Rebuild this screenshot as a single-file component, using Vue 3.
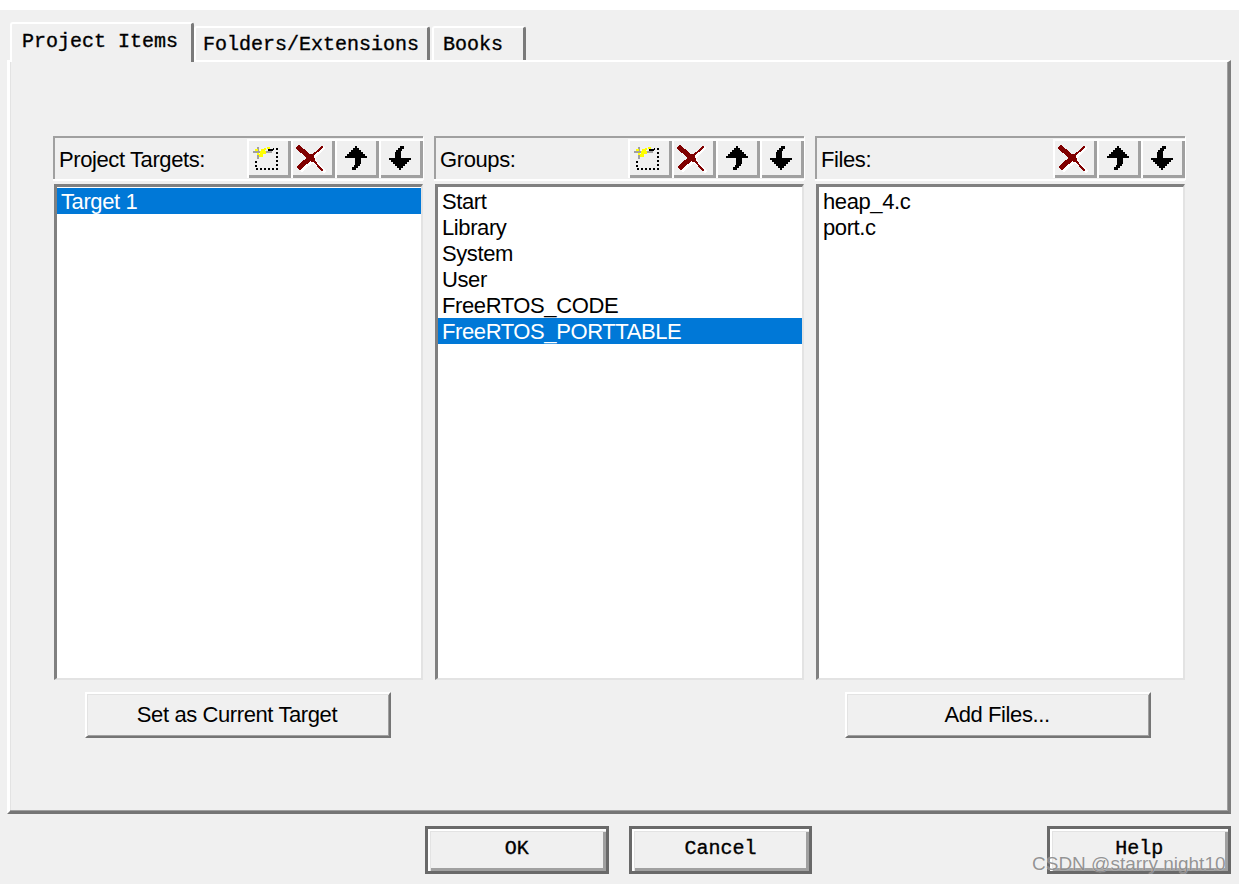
<script setup>
const columns = [
  { title: 'Project Targets:', tools: ['new', 'del', 'up', 'down'], items: ['Target 1'], selected: 0, action: 'Set as Current Target', actionClass: 'act-left' },
  { title: 'Groups:', tools: ['new', 'del', 'up', 'down'], items: ['Start', 'Library', 'System', 'User', 'FreeRTOS_CODE', 'FreeRTOS_PORTTABLE'], selected: 5 },
  { title: 'Files:', tools: ['del', 'up', 'down'], items: ['heap_4.c', 'port.c'], selected: -1, action: 'Add Files...', actionClass: 'act-right' }
]
const tabs = ['Project Items', 'Folders/Extensions', 'Books']
</script>

<template>
  <div class="page">
    <div class="dialog">
      <div class="tabs">
        <div v-for="(t, i) in tabs" :key="t" class="tab" :class="['tab' + i, { active: i === 0 }]">{{ t }}</div>
      </div>
      <div class="panel">
        <div class="grid">
          <section v-for="c in columns" :key="c.title" class="col">
            <header class="head">
              <span class="label">{{ c.title }}</span>
              <div class="tools">
                <button v-for="t in c.tools" :key="t" class="tool">
                  <svg width="44" height="39" viewBox="0 0 44 39">
                    <g v-if="t === 'new'" shape-rendering="crispEdges">
                      <rect x="9" y="10" width="21" height="20" fill="none" stroke="#000" stroke-width="2" stroke-dasharray="2 2" />
                      <path d="M6 8h20v6H6zM6 8h8v14H6z" fill="#f0f0f0" />
                      <path d="M6 12h19v2H6zM10 8h2v12h-2z" fill="#a0a0a0" />
                      <path d="M8 10h3v2H8zM14 10h4v2h-4zM13 12h6v3h-6zM12 15h4v3h-4zM20 8h3v2h-3zM17 9h2v2h-2zM10 14h2v2h-2z" fill="#ffff00" />
                      <path d="M21 10h5v2h-5z" fill="#000" />
                    </g>
                    <g v-else-if="t === 'del'" fill="none" stroke-linecap="square" shape-rendering="crispEdges">
                      <path d="M9 10 L22 21 M10 29 L21 19" stroke="#fff" stroke-width="5" transform="translate(1 1)" />
                      <path d="M21 19 L31 9 M20 20 L32 32" stroke="#fff" stroke-width="3" transform="translate(1 0)" />
                      <path d="M8 9 L21 20 M9 28 L20 18" stroke="#800000" stroke-width="5" />
                      <path d="M20 18 L31 8 M21 20 L31 31" stroke="#800000" stroke-width="2" />
                    </g>
                    <g v-else :transform="t === 'down' ? 'rotate(180 21 19)' : ''" fill="#000" shape-rendering="crispEdges">
                      <path d="M20 7h2v2h2v2h2v2h2v2h2v2h2v2H26v6h-1v2h-2v2h-2v2h-4v-3h2v-2h1V19H10v-2h2v-2h2v-2h2v-2h2V9h2z" />
                    </g>
                  </svg>
                </button>
              </div>
            </header>
            <ul class="list">
              <li v-for="(it, i) in c.items" :key="it" :class="{ sel: i === c.selected }">{{ it }}</li>
            </ul>
            <button v-if="c.action" class="action" :class="c.actionClass">{{ c.action }}</button>
          </section>
        </div>
      </div>
      <footer class="footer">
        <button class="dlg ok">OK</button>
        <button class="dlg cancel">Cancel</button>
        <button class="dlg help">Help</button>
      </footer>
    </div>
    <div class="watermark">CSDN @starry night10</div>
  </div>
</template>

<style>
html, body { margin: 0; background: #fff; overflow: hidden; }
</style>

<style scoped>
.page {
  position: relative;
  width: 1239px;
  height: 884px;
  padding-top: 10px;
  box-sizing: border-box;
  background: #fff;
  overflow: hidden;
}
.dialog {
  height: 874px;
  box-sizing: border-box;
  padding: 12px 8px 0 7px;
  background: #f0f0f0;
}
.tabs {
  display: flex;
  align-items: flex-end;
  height: 40px;
  padding-left: 3px;
  position: relative;
  z-index: 1;
}
.tab {
  box-sizing: border-box;
  height: 34px;
  margin-bottom: 2px;
  padding: 2px 0 0 7px;
  font: 20px/30px "Liberation Mono", monospace;
  -webkit-text-stroke: 0.35px #000;
  color: #000;
  background: #f0f0f0;
  border-top: 2px solid #fff;
  border-left: 2px solid #fff;
  border-right: 3px solid #7a7a7a;
  border-radius: 3px 3px 0 0;
  white-space: nowrap;
}
.tab.active {
  height: 40px;
  margin-bottom: 0;
  padding: 0 0 0 10px;
  line-height: 35px;
}
.tab0 { width: 184px; }
.tab1 { width: 236px; }
.tab2 { width: 94px; margin-left: 2px; padding-left: 9px; }
.panel {
  box-sizing: border-box;
  height: 754px;
  margin-top: -2px;
  padding: 74px 0 0 43px;
  background: #f0f0f0;
  border-top: 2px solid #fff;
  border-left: 3px solid #fff;
  border-right: 3px solid #7e7e7e;
  border-bottom: 3px solid #757575;
  box-shadow: inset -1px -1px 0 #a0a0a0, inset 1px 0 0 #e3e3e3;
}
.grid {
  display: grid;
  grid-template-columns: repeat(3, 370px);
  column-gap: 11px;
}
.col { display: flex; flex-direction: column; }
.head {
  box-sizing: border-box;
  display: flex;
  align-items: center;
  justify-content: space-between;
  height: 43px;
  border-top: 2px solid #a0a0a0;
  border-left: 2px solid #a0a0a0;
  box-shadow: 1px 1px 0 #fff, 0 2px 0 #fff;
  padding-left: 4px;
}
.label, .list, .action {
  font-family: "Liberation Sans", Arial, sans-serif;
  font-size: 22px;
  letter-spacing: -0.4px;
  color: #000;
}
.label { padding-top: 2px; }
.tools { display: flex; align-self: stretch; margin-top: 1px; }
.tool {
  box-sizing: border-box;
  width: 44px;
  height: 39px;
  padding: 0;
  margin: 0;
  border: 0;
  background: #f0f0f0;
  box-shadow: inset 2px 2px 0 #fff, inset -3px -3px 0 #a0a0a0;
}
.tool svg { display: block; }
.list {
  box-sizing: border-box;
  height: 496px;
  margin: 5px 0 0 1px;
  padding: 1px 0 0;
  list-style: none;
  background: #fff;
  border-top: 3px solid #808080;
  border-left: 3px solid #808080;
  border-right: 2px solid #e3e3e3;
  border-bottom: 2px solid #e3e3e3;
}
.list li {
  height: 26px;
  padding-left: 4px;
  line-height: 28px;
  white-space: nowrap;
}
.list li.sel { background: #0078d7; color: #fff; }
.action {
  box-sizing: border-box;
  width: 306px;
  height: 46px;
  margin-top: 12px;
  padding: 0 2px 0 0;
  background: #f0f0f0;
  border: 2px solid;
  border-color: #fff #757575 #757575 #fff;
  box-shadow: inset 1px 1px 0 #e3e3e3, inset -1px -1px 0 #a0a0a0;
}
.act-left { margin-left: 32px; }
.act-right { margin-left: 30px; }
.footer {
  display: flex;
  margin-top: 12px;
  padding-left: 418px;
}
.dlg {
  box-sizing: border-box;
  width: 184px;
  height: 48px;
  padding: 0 0 3px;
  font: 20px "Liberation Mono", monospace;
  -webkit-text-stroke: 0.35px #000;
  color: #000;
  background: #f0f0f0;
  border: 3px solid #696969;
  box-shadow: inset 2px 2px 0 #fff, inset 3px 3px 0 #e3e3e3, inset -3px -3px 0 #a0a0a0;
}
.cancel { margin-left: 20px; }
.help { margin-left: 235px; }
.watermark {
  position: absolute;
  left: 1032px;
  top: 852px;
  font: 19px/24px "Liberation Sans", Arial, sans-serif;
  color: rgba(120, 120, 120, 0.8);
  text-shadow: 0 0 1px rgba(255, 255, 255, 0.8);
  white-space: nowrap;
}
</style>
